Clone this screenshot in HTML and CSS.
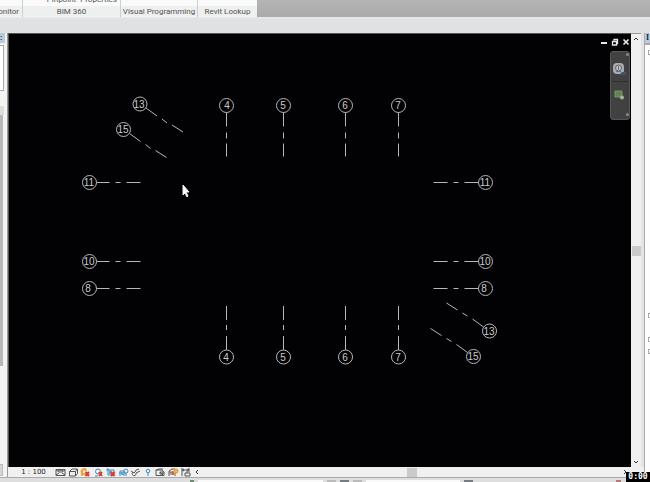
FILE: index.html
```html
<!DOCTYPE html>
<html lang="en">
<head>
<meta charset="utf-8">
<title>Floor plan view</title>
<link rel="stylesheet" href="styles.css">
</head>
<body>
<header class="ribbon">
  <section class="group g-monitor"><div class="tools"></div><h2><span>onitor</span></h2></section>
  <section class="group g-bim"><div class="tools"><button>Pinpoint</button><button>Properties</button></div><h2>BIM 360</h2></section>
  <section class="group g-visual"><div class="tools"></div><h2>Visual Programming</h2></section>
  <section class="group g-lookup"><div class="tools"></div><h2>Revit Lookup</h2></section>
</header>
<div class="strip"></div>
<div class="workspace">
  <aside class="side-left">
    <div class="side-title">:</div>
    <div class="side-box"></div>
    <div class="side-gap"></div>
    <div class="side-track"></div>
    <div class="side-rest"></div>
    <div class="side-button"></div>
  </aside>
  <main class="view">
    <div class="view-row">
      <div class="canvas">
        <svg class="drawing" viewBox="9 34 622 433" preserveAspectRatio="xMinYMin meet">
          <defs>
            <g id="down"><circle r="7"/><path d="M0 7V21M0 27V33M0 38V51"/></g>
            <g id="up"><circle r="7"/><path d="M0-7V-21M0-27V-32M0-37V-51"/></g>
            <g id="right"><circle r="7"/><path d="M7 0H20M26 0H31M37 0H51"/></g>
            <g id="left"><circle r="7"/><path d="M-7 0H-21M-27 0H-32M-38 0H-52"/></g>
            <g id="slant"><circle r="7"/><path d="M6 4L17 12M22 15L27 19M32 21L43 28"/></g>
            <g id="slant-up"><circle r="7"/><path d="M-6-4L-17-12M-22-15L-27-18M-32-21L-43-28"/></g>
          </defs>
          <g class="grid-lines">
            <use href="#down" x="226.500" y="105.500"/><use href="#down" x="283.500" y="105.500"/><use href="#down" x="345.500" y="105.500"/><use href="#down" x="398.500" y="105.500"/>
            <use href="#up" x="226.500" y="357"/><use href="#up" x="283.500" y="357"/><use href="#up" x="345.500" y="357"/><use href="#up" x="398.500" y="357"/>
            <use href="#right" x="89.500" y="182.500"/><use href="#right" x="89.500" y="261.500"/><use href="#right" x="89.500" y="288.500"/>
            <use href="#left" x="485.500" y="182.500"/><use href="#left" x="485.500" y="261.500"/><use href="#left" x="485.500" y="288.500"/>
            <use href="#slant" x="140" y="104"/><use href="#slant" x="123.500" y="129.500"/>
            <use href="#slant-up" x="489.500" y="331"/><use href="#slant-up" x="473.500" y="356.500"/>
          </g>
          <g class="grid-names">
            <text x="227" y="109">4</text><text x="283" y="109">5</text><text x="345" y="109">6</text><text x="398" y="109">7</text>
            <text x="226" y="361">4</text><text x="283" y="361">5</text><text x="345" y="361">6</text><text x="398" y="361">7</text>
            <text x="139" y="108">13</text><text x="123" y="133">15</text>
            <text x="89" y="186">11</text><text x="89" y="265">10</text><text x="88" y="292">8</text>
            <text x="485" y="186">11</text><text x="485" y="265">10</text><text x="484" y="292">8</text>
            <text x="489" y="335">13</text><text x="473" y="360">15</text>
          </g>
          <path class="cursor" d="M183 185V195L185 193L187 197L188 196L186 192H189Z"/>
        </svg>
        <div class="overlay">
          <div class="window-buttons">
            <button aria-label="Minimize"><svg viewBox="0 0 8 8"><path d="M1 5H7" stroke-width="2"/></svg></button>
            <button aria-label="Restore"><svg viewBox="0 0 8 8"><path d="M3 2.500V1.500H6.500V5.500H6M1.500 3.500H5.500V7H1.500ZM1 3.500H6" stroke-width="1.300"/></svg></button>
            <button aria-label="Close"><svg viewBox="0 0 8 8"><path d="M1.500 1.500L6.500 6.500M6.500 1.500L1.500 6.500" stroke-width="1.700"/></svg></button>
          </div>
          <nav class="navbar" aria-label="Navigation">
            <i class="dot"></i>
            <button aria-label="Steering wheel"><svg viewBox="0 0 16 16"><rect x="1" y="1" width="11" height="11" rx="4" fill="#a9adb0"/><circle cx="6.500" cy="6" r="3" fill="#bfc3c6" stroke="#63676a"/><path d="M4 9.500H9M6.500 4V8" stroke="#6b6f72"/><path d="M7 13L10 10H15L13 13Z" fill="#3b5678"/></svg></button>
            <hr>
            <button aria-label="Zoom region"><svg viewBox="0 0 16 16"><path d="M3 3H10V9H3Z" fill="#5f8650" stroke="#78966c"/><circle cx="10" cy="9.500" r="2" fill="#a8b4a4"/></svg></button>
            <i class="dot last"></i>
          </nav>
        </div>
      </div>
      <div class="vscroll">
        <button aria-label="Scroll up"><svg viewBox="0 0 6 6"><path d="M1 4L3 2L5 4"/></svg></button>
        <div class="before"></div><div class="thumb"></div><div class="after"></div>
        <button aria-label="Scroll down"><svg viewBox="0 0 6 6"><path d="M1 2L3 4L5 2"/></svg></button>
      </div>
    </div>
    <div class="view-bar">
      <button class="scale">1 : 100</button>
      <div class="icons">
        <button aria-label="Detail level"><svg viewBox="0 0 11 9"><path d="M1 1.500H10V7.500H1ZM1 2L4 4H7L10 2M1 7L4 5M10 7L7 5"/><path d="M3 2H8" stroke-width="1.500"/></svg></button>
        <button aria-label="Visual style"><svg viewBox="0 0 11 9"><path d="M1.500 3.500H7.500V8H1.500ZM1.500 3.500L4 1H9.500L7.500 3.500M9.500 1V5.500L7.500 8"/></svg></button>
        <button aria-label="Sun path"><svg viewBox="0 0 11 9"><path class="sun" d="M5 1L6 3M1 3L3 4M1 7L4 6M6 2A2.500 2.500 0 1 0 5 6"/><path class="red" d="M5.500 4L9 8M9 4L5.500 8"/></svg></button>
        <button aria-label="Shadows"><svg viewBox="0 0 11 9"><circle class="blue" cx="5" cy="3.500" r="2.500"/><path class="blue" d="M2 8H5"/><path class="red" d="M6 4L9 8M9 4L6 8"/></svg></button>
        <button aria-label="Crop view"><svg viewBox="0 0 11 9"><path class="blue" d="M3 0V7H9M1 2H9V7M5 2V6"/><path class="fill-blue" d="M4 3H7V6H4Z"/><path class="red" d="M6 4L9.500 8M9.500 4L6 8"/></svg></button>
        <button aria-label="Show crop region"><svg viewBox="0 0 11 9"><path class="blue" d="M2 8V3H6V8M1 5H7"/><path class="fill-blue" d="M3 4H6V7H3Z"/><circle class="blue" cx="8" cy="3" r="2"/><path class="blue" d="M8 5V8"/></svg></button>
        <button aria-label="Temporary hide"><svg viewBox="0 0 11 9"><path d="M1 3L4 5L5 4L6 2L9 1M3 4A2 2 0 1 0 6 5L10 3"/></svg></button>
        <button aria-label="Reveal hidden elements"><svg viewBox="0 0 11 9"><circle class="blue" cx="5" cy="3" r="1.800"/><path class="blue" d="M5 5V8"/></svg></button>
        <button aria-label="Temporary view properties"><svg viewBox="0 0 11 9"><path d="M1 7.500V2H7L9 4V7.500ZM1 2L4 1H8M5 4L9 8M5 4H8V6H5Z"/></svg></button>
        <button aria-label="Analytical model"><svg viewBox="0 0 11 9"><path d="M1 8V3L4 1H7M3 7V4M5 7V3M7 8V5"/><path class="red thin" d="M1 4H5V7"/><circle class="sun" cx="8" cy="3" r="1.500"/></svg></button>
        <button aria-label="Reveal constraints"><svg viewBox="0 0 11 9"><path d="M2 0V8M9 0V4M2 2H9M4 1L2 2L4 3M7 1L9 2L7 3M5 5H10V8H5ZM7 3V5"/></svg></button>
      </div>
      <button class="arrow" aria-label="Scroll left"><svg viewBox="0 0 6 6"><path d="M4 1L2 3L4 5"/></svg></button>
      <div class="h-before"></div><div class="h-thumb"></div><div class="h-after"></div>
      <button class="arrow" aria-label="Scroll right"><svg viewBox="0 0 6 6"><path d="M2 1L4 3L2 5"/></svg></button>
      <div class="corner"></div>
    </div>
  </main>
  <aside class="side-right">
    <div class="side-title">I</div>
    <div class="tree"><i></i><i></i><i></i><i></i></div>
  </aside>
</div>
<footer class="status"><i class="green"></i><span class="field first"></span><i></i><i class="dark"></i><i></i><span class="field second"></span><i class="dark"></i><span class="space"></span><i class="red-mark"></i></footer>
<time class="timer">0:00</time>
</body>
</html>
```
FILE: styles.css
```css
* { box-sizing: border-box; }
body {
  margin: 0;
  height: 100vh;
  display: flex;
  flex-direction: column;
  overflow: hidden;
  background: #e3e4e5;
  font: 8px/10px Roboto, sans-serif;
  color: #555;
}
button {
  padding: 0;
  border: 0;
  background: none;
  font: inherit;
  color: inherit;
  display: block;
}
svg { display: block; fill: none; stroke: #444; }

.ribbon {
  flex: none;
  height: 17px;
  display: flex;
  background: linear-gradient(#b5b5b5, #aaa);
}
.group {
  display: flex;
  flex-direction: column;
  border-right: 1px solid #cfcfcf;
  background: #eeefef;
}
.group h2 {
  margin: 0;
  height: 11px;
  font: inherit;
  line-height: 12px;
  text-align: center;
  white-space: nowrap;
  border-bottom: 1px solid #f5f5f5;
}
.tools {
  height: 6px;
  display: flex;
  align-items: flex-end;
  justify-content: flex-end;
  gap: 4px;
  padding-right: 3px;
  overflow: hidden;
  background: #fafafa;
}
.tools button { line-height: 12px; }
.g-monitor { width: 23px; }
.g-monitor h2 { display: flex; justify-content: flex-end; padding-right: 3px; }
.g-bim { width: 98px; }
.g-visual { width: 77px; }
.g-lookup { width: 59px; border-right: 0; }

.strip {
  flex: none;
  height: 16px;
  background: linear-gradient(#e8e8e8, #e0e1e3 3px);
}
.workspace { flex: 1; min-height: 0; display: flex; }

.side-left {
  width: 7px;
  padding-right: 3px;
  display: flex;
  flex-direction: column;
  background: #f3f3f3;
}
.side-title {
  height: 10px;
  margin-right: -1px;
  background: #bccbdc;
  color: #223;
  font-weight: bold;
  line-height: 9px;
}
.side-box { height: 46px; margin-top: 2px; border: solid #aaa; border-width: 1px 1px 1px 0; background: #fff; }
.side-gap { height: 24px; border-bottom: 9px solid #deddda; }
.side-track { flex: 251; margin-right: 1px; background: #b8b8b8; }
.side-rest { flex: 98; }
.side-button { height: 12px; margin-bottom: 1px; margin-right: 1px; background: #d5d5d5; border: solid #bbb; border-width: 1px 1px 1px 0; }

.view {
  flex: 1;
  min-width: 0;
  display: flex;
  flex-direction: column;
  border-left: 1px solid #999;
}
.view-row { flex: 1; min-height: 0; display: flex; }
.canvas {
  flex: 1;
  min-width: 0;
  position: relative;
  background: #020103;
  border: solid #555;
  border-width: 1px 0 0 1px;
}
.drawing { width: 100%; height: 100%; }
.grid-lines { stroke: #b5b8b8; stroke-width: 1; }
.grid-names {
  fill: #ccc;
  stroke: none;
  font: 10px "Liberation Sans", sans-serif;
  text-anchor: middle;
}
.cursor { fill: #fff; stroke: #eee; stroke-width: 1; }
.overlay {
  position: absolute;
  top: 4px;
  right: 1px;
  display: flex;
  flex-direction: column;
  align-items: flex-end;
  gap: 5px;
}
.window-buttons { display: flex; gap: 3px; }
.window-buttons svg { width: 8px; height: 8px; stroke: #e8e8e8; }
.navbar {
  width: 20px;
  height: 69px;
  display: flex;
  flex-direction: column;
  align-items: center;
  gap: 3px;
  border: 1px solid #555;
  border-radius: 3px;
  background: #414141;
}
.navbar button { margin-top: 3px; }
.navbar svg { width: 16px; height: 16px; stroke: none; }
.navbar hr { width: 16px; margin: 0; border: 0; border-top: 1px solid #303030; }
.dot { width: 3px; height: 3px; margin-top: 1px; align-self: flex-end; border-radius: 50%; background: #888; }
.dot.last { margin-top: 6px; }

.vscroll {
  width: 10px;
  margin-right: 3px;
  display: flex;
  flex-direction: column;
  align-items: center;
  background: #f0f0f0;
  border-top: 1px solid #999;
}
.vscroll button { height: 10px; }
.vscroll svg, .arrow svg { width: 6px; height: 6px; stroke: #333; }
.before { flex: 202; }
.thumb { width: 9px; height: 10px; background: #cacaca; }
.after { flex: 201; }

.view-bar {
  flex: none;
  height: 10px;
  display: flex;
  align-items: center;
  background: #f0f0f0;
  color: #222;
}
.scale { width: 45px; padding-left: 6px; text-align: center; font-family: "DejaVu Sans", sans-serif; font-size: 7px; white-space: pre; }
.icons { display: flex; margin-left: 2px; }
.icons button { width: 12px; margin-right: 1px; }
.icons button:nth-child(even) { margin-right: 0; }
.icons svg { width: 11px; height: 9px; stroke: #555; }
.icons .blue { stroke: #398bc4; }
.icons .fill-blue { fill: #67a9d5; stroke: none; }
.icons .red { stroke: #db3d2b; stroke-width: 2; }
.icons .red.thin { stroke-width: 1; }
.icons .sun { stroke: #e7a72f; stroke-width: 2; }
.arrow { width: 8px; padding-left: 1px; }
.h-before { flex: 204; }
.h-thumb { width: 10px; height: 9px; background: #cacaca; }
.h-after { flex: 202; }
.corner { width: 15px; }

.side-right {
  width: 6px;
  display: flex;
  flex-direction: column;
  overflow: hidden;
  border-left: 1px solid #aaa;
}
.side-right .side-title { margin: 0; padding-left: 1px; font-family: "Liberation Serif", serif; }
.tree { flex: 1; padding: 5px 0 0 3px; background: #fdfdfd; border-top: 2px solid #aaa; }
.tree i { display: block; width: 5px; height: 5px; border: 1px solid #aaa; }
.tree i:nth-child(2) { margin-top: 258px; }
.tree i:nth-child(3) { margin-top: 19px; }
.tree i:nth-child(4) { margin-top: 7px; }

.status {
  flex: none;
  height: 5px;
  padding-top: 2px;
  display: flex;
  gap: 4px;
  background: #dedede;
  border-top: 1px solid #aaa;
}
.status i { width: 9px; background: #bbb; }
.status .green { width: 4px; margin-left: 190px; background: #718b71; }
.status .dark { background: #777b84; }
.status .red-mark { width: 5px; margin-right: 29px; background: #b77; }
.field { background: #fafafa; }
.first { width: 125px; }
.second { width: 94px; }
.space { flex: 1; }
.timer {
  position: absolute;
  right: 0;
  bottom: 0;
  width: 24px;
  height: 10px;
  background: #000;
  color: #fff;
  font: bold 8px/10px "DejaVu Sans Mono", monospace;
  text-align: center;
}
```
